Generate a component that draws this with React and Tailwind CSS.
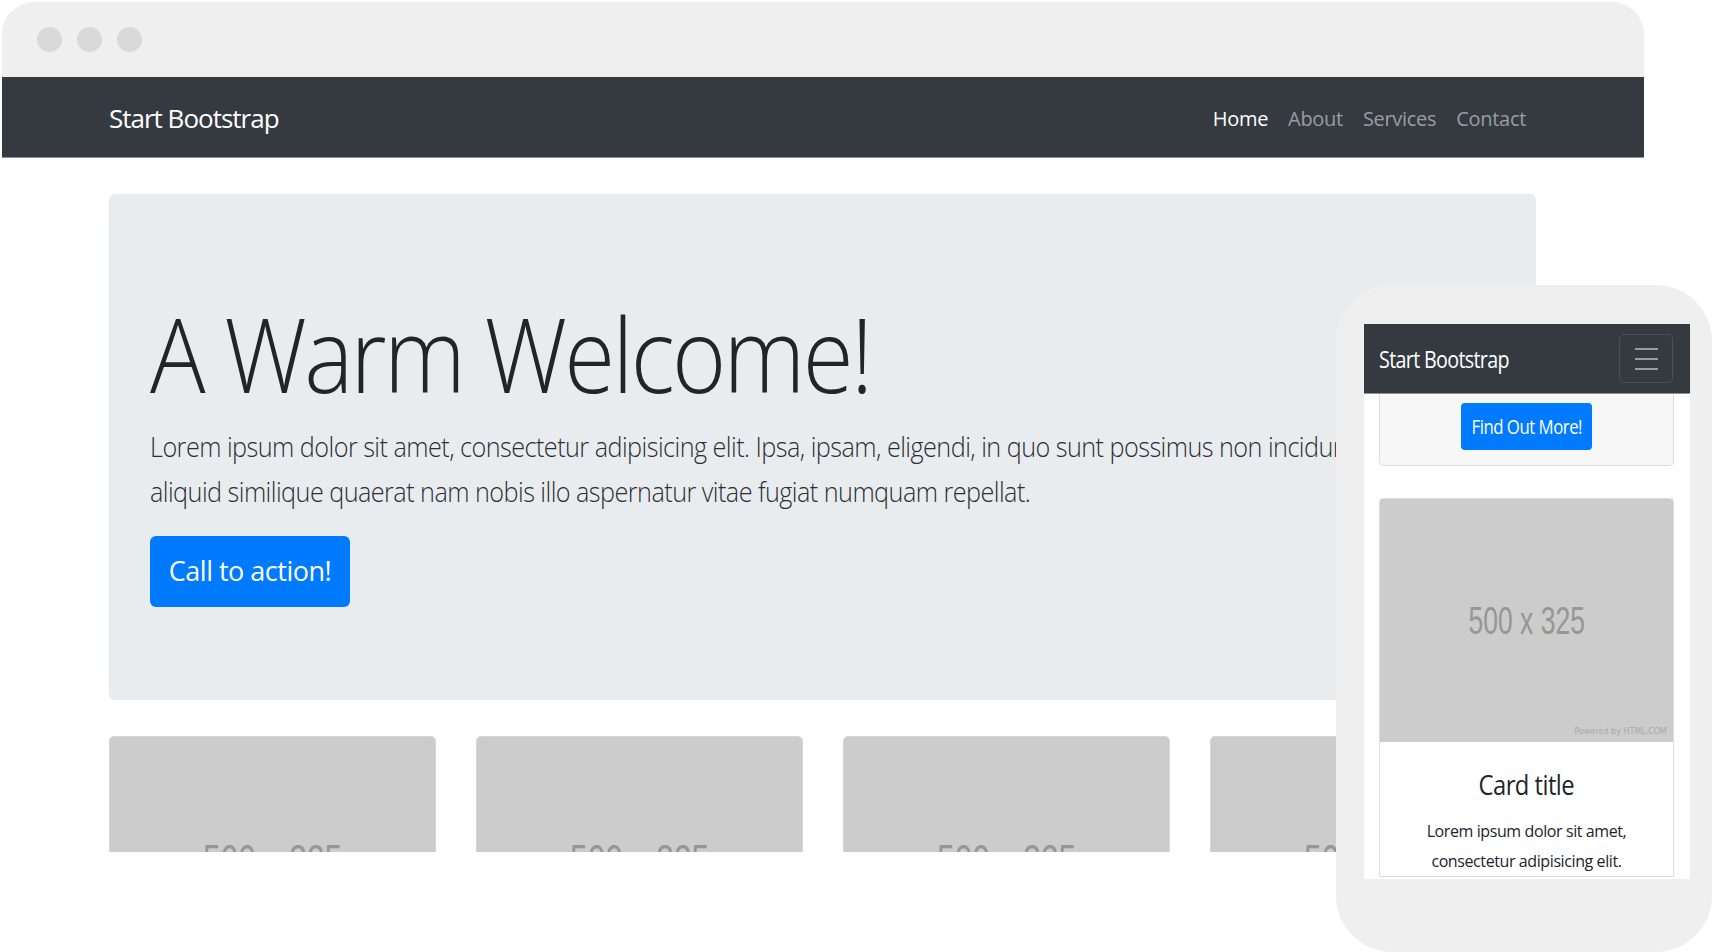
import React from "react";

function DeskCard() {
  return (
    <div className="w-[327px] shrink-0 h-[300px] rounded-t-[5px] border border-[#d6d6d6] bg-[#cccccc] flex flex-col">
      <div className="h-[248px] flex items-center justify-center">
        <span className="inline-block text-[44px] leading-none text-[#969696] font-['Liberation_Sans',sans-serif] scale-x-[0.72]">500 x 325</span>
      </div>
    </div>
  );
}

export default function App() {
  return (
    <div className="relative w-[1712px] h-[952px] overflow-hidden bg-white font-['Open_Sans',sans-serif] text-[#212529]">
      {/* Browser window */}
      <div className="ml-[2px] mt-[2px] w-[1642px] h-[850px] overflow-hidden flex flex-col">
        <div className="h-[75px] shrink-0 bg-[#efefef] rounded-t-[32px] flex items-center gap-[15px] pl-[35px]">
          <span className="w-[25px] h-[25px] rounded-full bg-[#d9d9d9]" />
          <span className="w-[25px] h-[25px] rounded-full bg-[#d9d9d9]" />
          <span className="w-[25px] h-[25px] rounded-full bg-[#d9d9d9]" />
        </div>
        <div className="h-[81px] shrink-0 bg-[#343a40] border-b border-[#8e9196] flex items-center justify-between pl-[107px] pr-[118px] pt-[3px]">
          <span className="text-[26px] tracking-[-1px] text-white">Start Bootstrap</span>
          <div className="flex items-center gap-[20px] text-[20px] tracking-[-0.3px]">
            <span className="text-white">Home</span>
            <span className="text-[#9a9da0]">About</span>
            <span className="text-[#9a9da0]">Services</span>
            <span className="text-[#9a9da0]">Contact</span>
          </div>
        </div>
        <div className="pl-[107px] pt-[36px] flex flex-col">
          <div className="w-[1427px] h-[506px] shrink-0 rounded-[6px] bg-[#e9ecef] pl-[41px] pt-[97px] flex flex-col items-start">
            <h1 className="origin-left scale-x-[0.89] text-[104px] leading-[1.2] font-light tracking-[-3px] whitespace-nowrap">A Warm Welcome!</h1>
            <p className="origin-left scale-x-[0.9] mt-[8px] text-[28px] leading-[45px] font-light tracking-[-0.6px] whitespace-nowrap text-[#2b2f33]">
              Lorem ipsum dolor sit amet, consectetur adipisicing elit. Ipsa, ipsam, eligendi, in quo sunt possimus non incidunt odit vero
              <br />
              aliquid similique quaerat nam nobis illo aspernatur vitae fugiat numquam repellat.
            </p>
            <button className="mt-[22px] w-[200px] h-[71px] rounded-[6px] bg-[#007bff] text-white text-[27px] tracking-[-0.5px] flex items-center justify-center">
              Call to action!
            </button>
          </div>
          <div className="mt-[36px] flex gap-[40px]">
            <DeskCard />
            <DeskCard />
            <DeskCard />
            <DeskCard />
          </div>
        </div>
      </div>

      {/* Phone */}
      <div className="absolute left-[1336px] top-[285px] w-[376px] h-[667px] rounded-[56px] bg-[#efefef] pl-[28px] pt-[39px]">
        <div className="w-[326px] h-[555px] bg-white overflow-hidden flex flex-col">
          <div className="h-[70px] shrink-0 bg-[#343a40] border-b border-[#8e9196] flex items-center justify-between pl-[15px] pr-[17px]">
            <span className="inline-block origin-left text-[24px] tracking-[-0.8px] text-white scale-x-[0.82] whitespace-nowrap">Start Bootstrap</span>
            <div className="w-[54px] h-[49px] rounded-[5px] border border-[#4a5056] flex flex-col items-center justify-center gap-[8px]">
              <span className="w-[23px] h-[2px] bg-[#9a9da0]" />
              <span className="w-[23px] h-[2px] bg-[#9a9da0]" />
              <span className="w-[23px] h-[2px] bg-[#9a9da0]" />
            </div>
          </div>
          <div className="ml-[15px] w-[295px] h-[72px] shrink-0 bg-[#f7f7f7] border border-t-0 border-[#dcdcdc] rounded-b-[5px] flex justify-center pt-[9px]">
            <button className="w-[131px] h-[47px] rounded-[4px] bg-[#007bff] text-white text-[20px] tracking-[-0.6px] flex items-center justify-center whitespace-nowrap">
              <span className="inline-block scale-x-[0.84] whitespace-nowrap">Find Out More!</span>
            </button>
          </div>
          <div className="ml-[15px] mt-[32px] w-[295px] shrink-0 border border-[#dcdcdc] rounded-t-[5px] flex flex-col">
            <div className="relative h-[243px] bg-[#cccccc] flex items-center justify-center">
              <span className="inline-block text-[39px] leading-none text-[#969696] font-['Liberation_Sans',sans-serif] scale-x-[0.68]">500 x 325</span>
              <span className="absolute right-[6px] bottom-[6px] text-[8px] leading-none text-[#a8a8a8] font-['DejaVu_Sans',sans-serif]">Powered by HTML.COM</span>
            </div>
            <div className="flex flex-col items-center pt-[26px]">
              <span className="inline-block text-[27px] leading-[34px] font-medium tracking-[-0.6px] text-[#212529] scale-x-[0.88]">Card title</span>
              <p className="mt-[14px] text-[16px] leading-[30px] text-center text-[#212529] tracking-[-0.4px]">
                Lorem ipsum dolor sit amet,
                <br />
                consectetur adipisicing elit.
              </p>
            </div>
          </div>
        </div>
      </div>
    </div>
  );
}
